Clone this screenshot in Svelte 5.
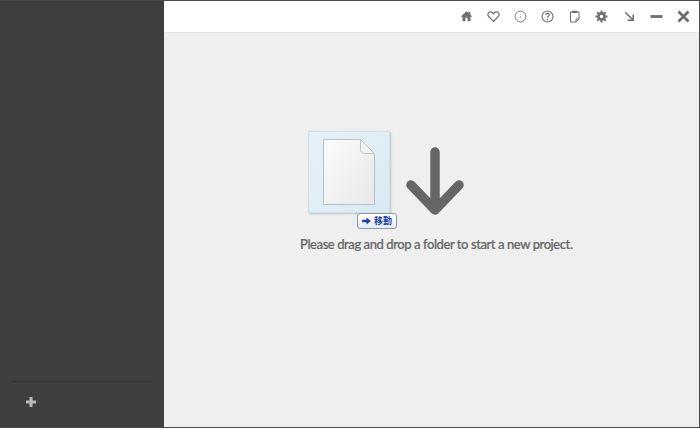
<script>
	const icons = ['home', 'heart', 'info', 'help', 'note', 'gear', 'arrow', 'min', 'close'];
</script>

<div class="window">
	<aside class="sidebar">
		<div class="footer">
			<button class="add" aria-label="Add">
				<svg width="12" height="12" viewBox="0 0 12 12"><path d="M6 1v10M1 6h10" stroke="#b9b9b9" stroke-width="3" fill="none" /></svg>
			</button>
		</div>
	</aside>
	<main class="main">
		<header class="toolbar">
			{#each icons as icon}
				<span class="icon">
					<svg width="15" height="15" viewBox="0 0 15 15" fill="none" stroke="#6e6e6e" stroke-width="1.2">
						{#if icon === 'home'}
							<path d="M7.500 2.200 1.800 7.400l.7.700 1-.9v5h2.900V8.800h2.200v3.400h2.900v-5l1 .9.700-.7-1.900-1.800V2.700h-1.500v1.200z" fill="#6e6e6e" stroke="none" />
						{:else if icon === 'heart'}
							<path d="M7.500 12.300 2.700 7.500C1 5.600 2 2.800 4.500 2.800c1.300 0 2.300.7 3 1.900.7-1.200 1.700-1.900 3-1.900 2.500 0 3.500 2.800 1.800 4.700z" stroke-width="1.200" />
						{:else if icon === 'info'}
							<circle cx="7.500" cy="7.500" r="5.400" stroke-width=".9" />
							<path d="M7.500 7v2.600M7.500 5.300v.9" stroke="#aaa" stroke-width=".8" />
						{:else if icon === 'help'}
							<circle cx="7.500" cy="7.500" r="5.500" stroke-width="1.100" />
							<path d="M5.800 6c0-2.200 3.500-2.200 3.500-.2 0 1.200-1.800 1.300-1.800 2.800M7.500 9.700v1.200" stroke-width="1.200" />
						{:else if icon === 'note'}
							<path d="M5 3H3.500v10H9l3-3V3h-1.500" stroke-width="1" />
							<path d="M5 1.800h5.500v2.200H5z" fill="#6e6e6e" stroke="none" />
							<path d="M9 13v-3h3" stroke-width=".9" />
						{:else if icon === 'gear'}
							<circle cx="7.500" cy="7.500" r="3.100" stroke-width="2.600" />
							<path d="M7.500 1.500v12M1.500 7.500h12M3.300 3.300l8.400 8.400M11.700 3.300l-8.400 8.400" stroke-width="2" stroke-dasharray="2 8" />
						{:else if icon === 'arrow'}
							<path d="M3.200 3.200l7.600 7.600M5.500 11.200h5.700V5.500" stroke-width="1.500" />
						{:else if icon === 'min'}
							<path d="M1.500 7.500h12" stroke-width="2.800" />
						{:else}
							<path d="M2.500 2.500l10 10M12.500 2.500l-10 10" stroke-width="2.800" />
						{/if}
					</svg>
				</span>
			{/each}
		</header>
		<section class="content">
			<div class="drop">
				<div class="tile">
					<svg class="page" width="54" height="68" viewBox="0 0 54 68">
						<defs>
							<linearGradient id="paper" x1="0" y1="0" x2="1" y2="1">
								<stop offset="0" stop-color="#fbfcfc" />
								<stop offset="1" stop-color="#e6e8e8" />
							</linearGradient>
						</defs>
						<path d="M1.500 1.500h37l14 14v51h-51z" fill="url(#paper)" stroke="#b5bfc4" />
						<path d="M38.500 1.500v10c0 2 1.500 4 4 4h10z" fill="#f1f2f2" stroke="#bcc4c8" />
					</svg>
					<span class="badge">
						<svg width="9" height="8" viewBox="0 0 10 9"><path d="M0 3.200h5V.5l5 4-5 4V5.800H0z" fill="#1c3fa8" /></svg>
						<span>移動</span>
					</span>
				</div>
				<svg class="down" width="60" height="70" viewBox="0 0 60 70">
					<path d="M30 6v58M6 39l24 25 24-25" fill="none" stroke="#666" stroke-width="9.500" stroke-linecap="round" stroke-linejoin="round" />
				</svg>
			</div>
			<p class="hint">Please drag and drop a folder to start a new project.</p>
		</section>
	</main>
</div>

<style>
	:global(body) {
		margin: 0;
	}

	.window {
		display: flex;
		width: 700px;
		height: 428px;
		box-sizing: border-box;
		border: 1px solid #4a4a4a;
		border-left: 0;
		background: #3e3e3e;
		font-family: Lato, sans-serif;
		overflow: hidden;
	}

	.sidebar {
		display: flex;
		flex-direction: column;
		justify-content: flex-end;
		width: 164px;
		flex: none;
		background: #3e3e3e;
	}

	.footer {
		margin: 0 12px;
		height: 45px;
		border-top: 1px solid #333;
	}

	.add {
		display: block;
		margin: 14px 0 0 13px;
		padding: 0;
		border: 0;
		background: none;
		line-height: 0;
	}

	.main {
		flex: 1;
		display: flex;
		flex-direction: column;
		min-width: 0;
	}

	.toolbar {
		display: flex;
		justify-content: flex-end;
		align-items: center;
		gap: 12.200px;
		height: 31px;
		padding-right: 8px;
		background: #fff;
		border-bottom: 1px solid #e6e6e6;
	}

	.icon {
		display: block;
		line-height: 0;
	}

	.content {
		flex: 1;
		background: #efefef;
		padding-top: 98px;
	}

	.drop {
		display: flex;
		align-items: flex-start;
		gap: 15px;
		margin-left: 144px;
	}

	.tile {
		position: relative;
		display: flex;
		align-items: center;
		justify-content: center;
		box-sizing: border-box;
		width: 82px;
		height: 82px;
		background: linear-gradient(135deg, #e6f1f7, #d9eaf3);
		border: 1px solid #cfe0ea;
		box-shadow: 1px 1px 2px #b9c3c8;
	}

	.page {
		display: block;
		margin-top: -1px;
	}

	.badge {
		position: absolute;
		left: 48px;
		top: 81px;
		display: flex;
		align-items: center;
		justify-content: center;
		gap: 3px;
		box-sizing: border-box;
		width: 40px;
		height: 16px;
		border: 1px solid #8d98a8;
		border-radius: 3px;
		background: linear-gradient(#fff, #e4ecf6);
		color: #1c3fa8;
		font: bold 9px/14px "Noto Sans CJK JP", sans-serif;
		white-space: nowrap;
	}

	.down {
		display: block;
		margin-top: 15px;
	}

	.hint {
		margin: 19px 0 0;
		padding-left: 136px;
		color: #666;
		font-size: 13px;
		font-weight: 500;
		letter-spacing: -0.42px;
		-webkit-text-stroke: 0.2px #666;
		line-height: 18px;
	}
</style>
